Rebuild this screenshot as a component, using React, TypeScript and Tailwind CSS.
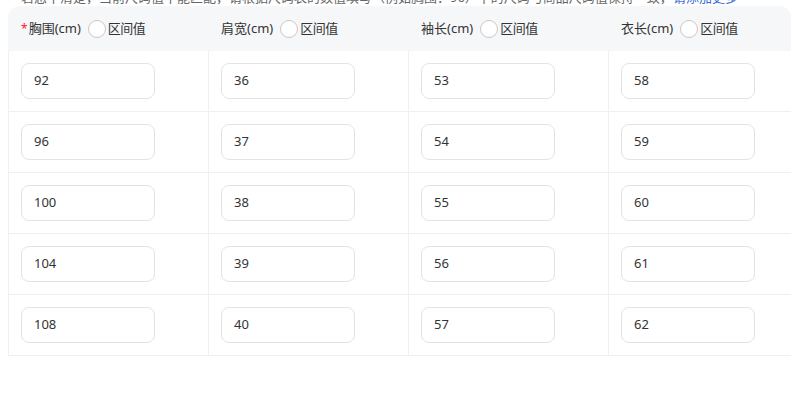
import React from "react";

const cols = ["胸围(cm)", "肩宽(cm)", "袖长(cm)", "衣长(cm)"];
const rows = [
  ["92", "36", "53", "58"],
  ["96", "37", "54", "59"],
  ["100", "38", "55", "60"],
  ["104", "39", "56", "61"],
  ["108", "40", "57", "62"],
];

export default function App() {
  return (
    <div
      className="w-[791px] h-[407px] bg-white overflow-hidden relative"
      style={{ fontFamily: '"Noto Sans", "Noto Sans CJK SC", sans-serif' }}
    >
      <div className="h-[6px] relative overflow-hidden">
        <div className="absolute left-[21px] top-[-12px] whitespace-nowrap text-[13px] leading-[18px] text-[#666]">
          若您不清楚，当前尺码值不能匹配，请根据尺码表的数值填写（例如胸围：96）下的尺码与商品尺码值保持一致，<span className="text-[#3b6fd8]">请添加更多</span>
        </div>
      </div>
      <div className="ml-[8px] w-[783px] rounded-t-[12px] overflow-hidden">
        <div className="flex h-[45px] bg-[#f6f7f9] items-center">
          {cols.map((c, i) => (
            <div key={c} className="w-[200px] shrink-0 flex items-center pl-[13px] text-[13px] text-[#333]">
              {i === 0 ? <span className="text-[#f5222d] mr-[1px] text-[12px]">*</span> : null}
              <span>{c}</span>
              <span className="ml-[7px] w-[18px] h-[18px] rounded-full border border-[#c8c8c8] bg-white inline-block" />
              <span className="ml-[2px] tracking-[-0.5px]">区间值</span>
            </div>
          ))}
        </div>
        {rows.map((r, ri) => (
          <div key={ri} className="flex h-[61px] border-b border-[#f0f0f0]">
            {r.map((v, ci) => (
              <div
                key={ci}
                className="w-[200px] shrink-0 border-l border-[#f0f0f0] flex items-center pl-[12px]"
              >
                <div className="w-[134px] h-[36px] rounded-[8px] border border-[#e3e3e3] flex items-center pl-[12px] text-[13px] text-[#333]">
                  {v}
                </div>
              </div>
            ))}
          </div>
        ))}
      </div>
    </div>
  );
}
